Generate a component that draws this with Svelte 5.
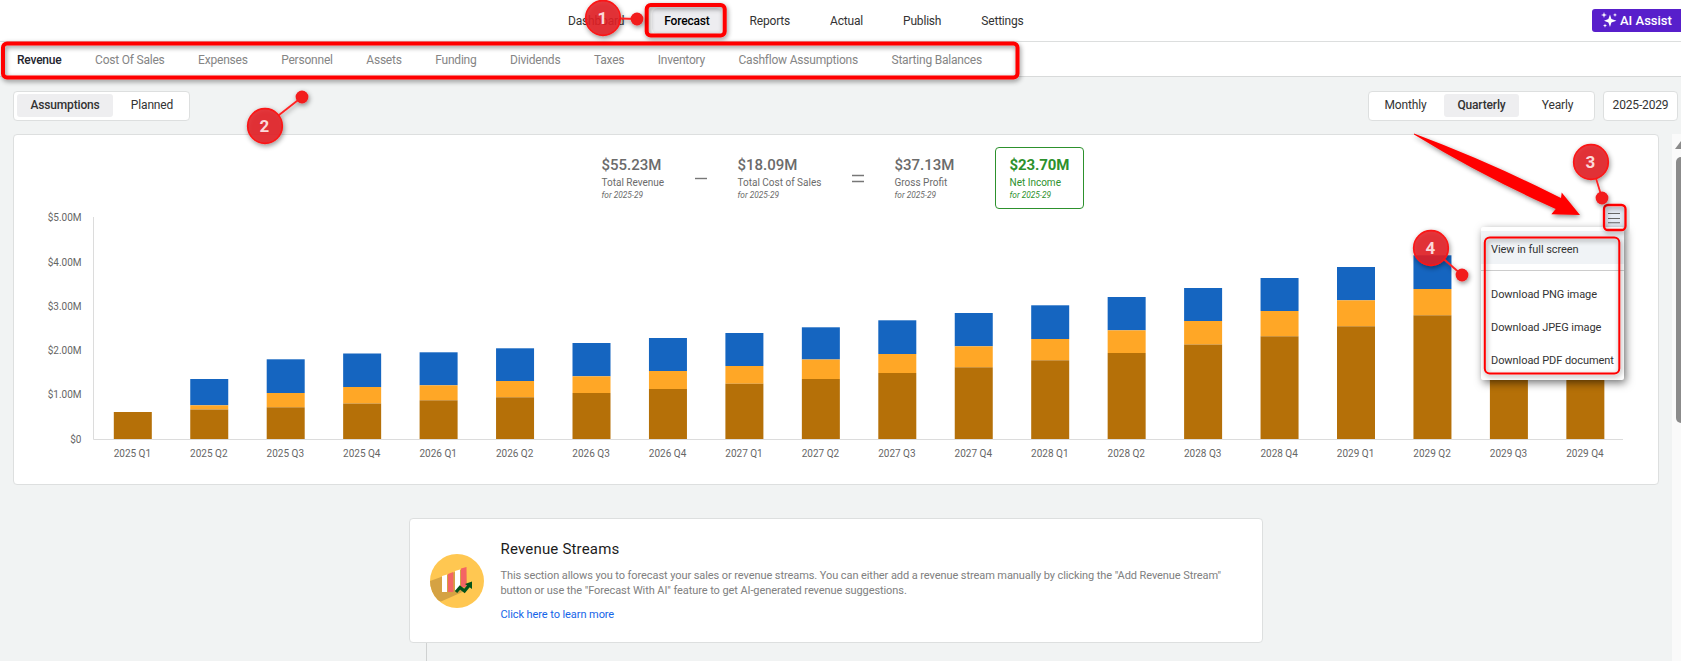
<script lang="ts">
  type Quarter = { label: string; tops: number[] };

  const mainNav = ['Dashboard', 'Forecast', 'Reports', 'Actual', 'Publish', 'Settings'];
  const subNav = [
    'Revenue', 'Cost Of Sales', 'Expenses', 'Personnel', 'Assets', 'Funding',
    'Dividends', 'Taxes', 'Inventory', 'Cashflow Assumptions', 'Starting Balances',
  ];
  const periods = ['Monthly', 'Quarterly', 'Yearly'];
  const exportItems = ['Download PNG image', 'Download JPEG image', 'Download PDF document'];

  let section = $state('Revenue');
  let view = $state('Assumptions');
  let period = $state('Quarterly');

  // stacked heights above the axis: brown, brown + orange, full stack
  const stacks = [
    [27, 27, 27], [29.5, 33.7, 60], [31.7, 46, 79.7], [35.5, 52, 85.5],
    [38.7, 53.7, 86.7], [41.7, 58, 90.7], [46, 62.7, 96], [50, 68, 101],
    [55.3, 73, 106], [60, 79.5, 111.7], [66, 85, 118.7], [71.7, 92.7, 126],
    [78.7, 100, 133.7], [86, 108.7, 142], [94.5, 118, 151], [102.7, 128, 161],
    [112.7, 138.7, 172], [123.7, 150, 183.7], [134, 162, 195], [145, 174, 207],
  ];
  const step = 76.45;
  const quarters: Quarter[] = stacks.map((tops, i) => ({
    label: `${2025 + Math.floor(i / 4)} Q${(i % 4) + 1}`,
    tops,
  }));
  const ticks = ['$5.00M', '$4.00M', '$3.00M', '$2.00M', '$1.00M', '$0'];

  const markers = [
    { n: 1, x: 603, y: 18, dx: 637, dy: 19 },
    { n: 2, x: 265, y: 126, dx: 302, dy: 97 },
    { n: 3, x: 1591, y: 162, dx: 1602, dy: 198 },
    { n: 4, x: 1431, y: 248, dx: 1462, dy: 275 },
  ];
</script>

<div class="app">
  <header class="topbar">
    <nav class="main-nav">
      {#each mainNav as item}
        <a href="#top" class:active={item === 'Forecast'}>{item}</a>
      {/each}
    </nav>
    <button class="ai">
      <svg width="16" height="16" viewBox="0 0 16 16" fill="#fff">
        <path d="M9 2.5 10.4 7 15.5 8.7 10.4 10.4 9 15 7.4 10.4 3 8.7 7.4 7Z" />
        <path d="M3 0 3.7 2.2 6 3 3.7 3.8 3 6 2.3 3.8 0 3 2.3 2.2Z" />
        <path d="M14 1 14.5 2.3 16 3 14.5 3.6 14 5 13.5 3.6 12 3 13.5 2.3Z" />
        <path d="M4 11.5 4.5 13 6 13.6 4.5 14.2 4 15.8 3.5 14.2 2 13.6 3.5 13Z" />
      </svg>
      <span>AI Assist</span>
    </button>
  </header>

  <nav class="sub-nav">
    {#each subNav as item}
      <button class:active={section === item} onclick={() => (section = item)}>{item}</button>
    {/each}
  </nav>

  <div class="toolbar">
    <div class="segment views">
      {#each ['Assumptions', 'Planned'] as item}
        <button class:active={view === item} onclick={() => (view = item)}>{item}</button>
      {/each}
    </div>
    <div class="segment periods">
      {#each periods as item}
        <button class:active={period === item} onclick={() => (period = item)}>{item}</button>
      {/each}
    </div>
    <div class="range">2025-2029</div>
  </div>

  <div class="body">
    <main>
      <section class="card chart-card">
        <div class="stats">
          <div class="stat first">
            <strong>$55.23M</strong><span>Total Revenue</span><em>for 2025-29</em>
          </div>
          <svg class="op" width="12" height="9"><path d="M0 4.5H12" /></svg>
          <div class="stat second">
            <strong>$18.09M</strong><span>Total Cost of Sales</span><em>for 2025-29</em>
          </div>
          <svg class="op" width="12" height="9"><path d="M0 1.5H12M0 7.5H12" /></svg>
          <div class="stat third">
            <strong>$37.13M</strong><span>Gross Profit</span><em>for 2025-29</em>
          </div>
          <div class="stat net">
            <strong>$23.70M</strong><span>Net Income</span><em>for 2025-29</em>
          </div>
        </div>

        <svg class="chart" width="1644" height="274" viewBox="14 210 1644 274">
          {#each ticks as tick, i}
            <text x="81.5" y={221.2 + i * 44.3} text-anchor="end">{tick}</text>
          {/each}
          {#each quarters as q, i}
            {@const x = 113.8 + i * step}
            <rect {x} y={439 - q.tops[2]} width="38" height={q.tops[2] - q.tops[1]} fill="#1565c0" />
            <rect {x} y={439 - q.tops[1]} width="38" height={q.tops[1] - q.tops[0]} fill="#ffa726" />
            <rect {x} y={439 - q.tops[0]} width="38" height={q.tops[0]} fill="#b57008" />
            <text x={x + 18.6} y="456.5" text-anchor="middle">{q.label}</text>
          {/each}
          <path class="axis" d="M93.5 217V439.5H1623" />
        </svg>

        <button class="burger" aria-label="Chart menu">
          <svg width="14" height="12"><path d="M1 1.5H13M1 6.5H13M1 10.8H13" /></svg>
        </button>
        <div class="menu">
          <div class="item hover">View in full screen</div>
          <hr />
          {#each exportItems as item}
            <div class="item">{item}</div>
          {/each}
        </div>
      </section>

      <section class="card intro">
        <svg class="badge" width="54" height="54" viewBox="0 0 54 54">
          <defs><clipPath id="disc"><circle cx="27" cy="27" r="27" /></clipPath></defs>
          <g clip-path="url(#disc)">
            <rect width="54" height="54" fill="#ffc751" />
            <path d="M0 27 36 14 37 36 11 47.5 0 44Z" fill="#d5a243" />
            <path d="M12 22 17 20.5V38H12Z" fill="#fff" />
            <path d="M18 20 23.3 18V38H18Z" fill="#f46464" />
            <path d="M25 17 30 15.5V34L25 37Z" fill="#fff" />
            <path d="M31 14.5 36.5 13V33H31Z" fill="#f46464" />
            <path d="M26 38 30 33.5 34.5 37 39.5 31" fill="none" stroke="#05531b" stroke-width="3.2" />
            <path d="M35 30 42 27.5 42 35Z" fill="#05531b" />
          </g>
        </svg>
        <div>
          <h2>Revenue Streams</h2>
          <p>
            This section allows you to forecast your sales or revenue streams. You can either add a revenue stream manually by clicking the "Add Revenue Stream"<br />
            button or use the "Forecast With AI" feature to get AI-generated revenue suggestions.
          </p>
          <a href="#learn">Click here to learn more</a>
        </div>
      </section>
      <div class="connector"></div>
    </main>

    <div class="scrollbar">
      <svg width="9" height="9"><path d="M3 9 9 1V9Z" fill="#8b8b8b" /></svg>
      <div class="thumb"></div>
    </div>
  </div>

  <svg class="notes" width="1681" height="661" viewBox="0 0 1681 661">
    <defs>
      <filter id="shade" x="-20%" y="-30%" width="140%" height="160%">
        <feDropShadow dx="1" dy="2" stdDeviation="2.5" flood-color="#000" flood-opacity="0.45" />
      </filter>
    </defs>
    <g filter="url(#shade)" fill="none" stroke="#f00">
      <rect x="646.7" y="5" width="78" height="30.5" rx="4" stroke-width="4" />
    </g>
    <g filter="url(#shade)" fill="none" stroke="#f00">
      <rect x="3" y="43.5" width="1014.5" height="34" rx="4" stroke-width="4" />
    </g>
    <g filter="url(#shade)" fill="none" stroke="#f00" stroke-width="2.3">
      <rect x="1604" y="205" width="21.5" height="25" rx="4" />
    </g>
    <g filter="url(#shade)" fill="none" stroke="#f00" stroke-width="2">
      <rect x="1484.8" y="237.5" width="134.5" height="136" rx="5" />
    </g>
    <path
      d="M1414 133.5Q1490 162 1561 198L1561.7 192.5 1580 215 1551.3 214.3 1555.7 209Q1480 175 1414 134.5Z"
      fill="#f00"
      filter="url(#shade)"
    />
    {#each markers as m}
      <g filter="url(#shade)">
        <path d="M{m.x} {m.y}L{m.dx} {m.dy}" stroke="#f22" stroke-width="1.8" clip-path="url(#line{m.n})" />
        <clipPath id="line{m.n}">
          <path
            clip-rule="evenodd"
            d="M0 0H1681V661H0ZM{m.x - 17} {m.y}a17 17 0 1 0 34 0a17 17 0 1 0 -34 0Z"
          />
        </clipPath>
        <circle cx={m.dx} cy={m.dy} r="6.4" fill="#f21b1f" />
        <circle cx={m.x} cy={m.y} r="17.3" fill="#e42226" fill-opacity="0.86" stroke="#fb1515" stroke-width="1.7" />
      </g>
      <text x={m.x - 0.5} y={m.y + 6} text-anchor="middle">{m.n}</text>
    {/each}
  </svg>
</div>

<style>
  :global(body) {
    margin: 0;
    overflow: hidden;
  }

  .app {
    position: relative;
    width: 1681px;
    height: 661px;
    overflow: hidden;
    display: flex;
    flex-direction: column;
    background: #f1f3f3;
    font-family: Roboto, sans-serif;
    font-size: 12px;
    color: #333;
  }

  .app * {
    box-sizing: border-box;
  }

  button {
    border: 0;
    padding: 0;
    background: none;
    font: inherit;
    color: inherit;
    letter-spacing: inherit;
    white-space: nowrap;
  }

  a {
    color: inherit;
    text-decoration: none;
  }

  .topbar {
    height: 42px;
    flex: none;
    display: flex;
    align-items: center;
    justify-content: space-between;
    padding-left: 556px;
    background: #fff;
    border-bottom: 1px solid #dcdede;
  }

  .main-nav {
    display: flex;
    gap: 16px;
    letter-spacing: -0.19px;
  }

  .main-nav a {
    padding: 6px 12px;
    border-radius: 6px;
    line-height: 14px;
  }

  .main-nav a.active {
    background: #ededf0;
    color: #000;
    font-weight: 500;
  }

  .ai {
    width: 89px;
    height: 23px;
    margin-bottom: 1px;
    padding-left: 9px;
    display: flex;
    align-items: center;
    gap: 3px;
    border-radius: 3px 0 0 3px;
    background: #581fcb;
    color: #fff;
    font-size: 13px;
    font-weight: 500;
  }

  .sub-nav {
    height: 35px;
    flex: none;
    display: flex;
    gap: 33.5px;
    padding: 2px 0 0 17px;
    background: #fff;
    border-bottom: 1px solid #d8dada;
    color: #858585;
    letter-spacing: -0.21px;
  }

  .sub-nav .active {
    color: #24242e;
    font-weight: 500;
  }

  .toolbar {
    height: 57px;
    flex: none;
    display: flex;
    padding: 14px 3px 0 13px;
    letter-spacing: -0.15px;
  }

  .segment {
    height: 30px;
    display: flex;
    padding: 2px 3px;
    background: #fff;
    border: 1px solid #dddfdf;
    border-radius: 4px;
  }

  .segment button {
    flex: none;
    height: 23px;
    padding-bottom: 1px;
    border-radius: 3px;
  }

  .segment .active {
    background: #eeeef0;
    font-weight: 500;
  }

  .views {
    width: 177px;
  }

  .views button:first-child {
    width: 96px;
  }

  .views button:last-child {
    width: 78px;
  }

  .periods {
    width: 227px;
    gap: 5px;
    margin-left: auto;
  }

  .periods button {
    width: 67px;
  }

  .periods button:nth-child(2) {
    width: 75px;
  }

  .range {
    width: 75px;
    height: 30px;
    margin-left: 8px;
    line-height: 26px;
    text-align: center;
    background: #fff;
    border: 1px solid #dddfdf;
    border-radius: 4px;
  }

  .body {
    flex: 1;
    display: flex;
    justify-content: space-between;
    padding-left: 13px;
  }

  main {
    width: 1646px;
  }

  .card {
    background: #fff;
    border: 1px solid #dddfdf;
    border-radius: 4px;
  }

  .chart-card {
    position: relative;
    height: 351px;
  }

  .stats {
    height: 75px;
    display: flex;
    padding-top: 12px;
    color: #6b6b6b;
  }

  .stat {
    height: 62px;
    padding-top: 9px;
    display: flex;
    flex-direction: column;
    white-space: nowrap;
  }

  .stat strong {
    font-size: 15px;
    font-weight: 500;
    line-height: 18px;
  }

  .stat span {
    font-size: 10px;
    line-height: 17px;
  }

  .stat em {
    font-size: 8.3px;
    line-height: 9px;
  }

  .stat.first {
    margin-left: 587.5px;
    width: 93.5px;
  }

  .stat.second {
    margin-left: 30.5px;
    width: 114.5px;
  }

  .stat.third {
    margin-left: 30.5px;
    width: 100.5px;
  }

  .stat.net {
    width: 89px;
    padding: 8px 0 0 13.5px;
    border: 1px solid #2d912d;
    border-radius: 4px;
    color: #2d912d;
  }

  .stat.net strong {
    font-weight: 700;
    letter-spacing: -0.1px;
  }

  .op {
    margin-top: 27px;
    stroke: #777;
    stroke-width: 1.4;
  }

  .chart {
    display: block;
    font-size: 10px;
    fill: #666;
  }

  .axis {
    fill: none;
    stroke: #dcdcdc;
  }

  .burger {
    position: absolute;
    left: 1590px;
    top: 72px;
    width: 21px;
    height: 22px;
    display: grid;
    place-items: center;
    background: #e6ebf5;
  }

  .burger svg {
    margin-right: 1px;
    stroke: #666;
    stroke-width: 1.1;
  }

  .menu {
    position: absolute;
    left: 1467px;
    top: 92px;
    width: 143px;
    height: 153px;
    padding-top: 4px;
    background: #fff;
    border-radius: 2px;
    box-shadow: 2px 3px 8px #0008;
    font-size: 11px;
    letter-spacing: -0.06px;
    color: #333;
  }

  .item {
    height: 33px;
    padding-left: 10px;
    line-height: 35px;
    white-space: nowrap;
  }

  .item.hover {
    line-height: 37px;
    background: #f0f3f6;
  }

  .menu hr {
    height: 1px;
    margin: 6px 0;
    border: 0;
    background: #ccc;
  }

  .intro {
    width: 854px;
    height: 125px;
    margin: 33px 0 0 396px;
    display: flex;
    gap: 16.5px;
    padding-left: 20px;
  }

  .badge {
    flex: none;
    margin-top: 35px;
  }

  h2 {
    margin: 21px 0 0;
    font-size: 15px;
    font-weight: 400;
    line-height: 18px;
    letter-spacing: 0.18px;
    color: #1c1c1c;
  }

  p {
    margin: 10px 0 0;
    font-size: 11px;
    line-height: 15px;
    letter-spacing: -0.08px;
    white-space: nowrap;
    color: #808080;
  }

  .intro a {
    display: block;
    margin-top: 9px;
    font-size: 11px;
    line-height: 15px;
    letter-spacing: -0.08px;
    color: #1565e8;
  }

  .connector {
    width: 1px;
    height: 20px;
    margin-left: 413px;
    background: #cfd1d1;
  }

  .scrollbar {
    width: 9px;
    padding-top: 6px;
    background: #fafafa;
  }

  .scrollbar svg {
    display: block;
  }

  .thumb {
    height: 266px;
    margin: 8px 0 0 4px;
    border-radius: 5px 0 0 5px;
    background: #8b8b8b;
  }

  .notes {
    position: absolute;
    inset: 0;
    pointer-events: none;
  }

  .notes text {
    fill: #fbdada;
    font-size: 17px;
    font-weight: 700;
  }
</style>
